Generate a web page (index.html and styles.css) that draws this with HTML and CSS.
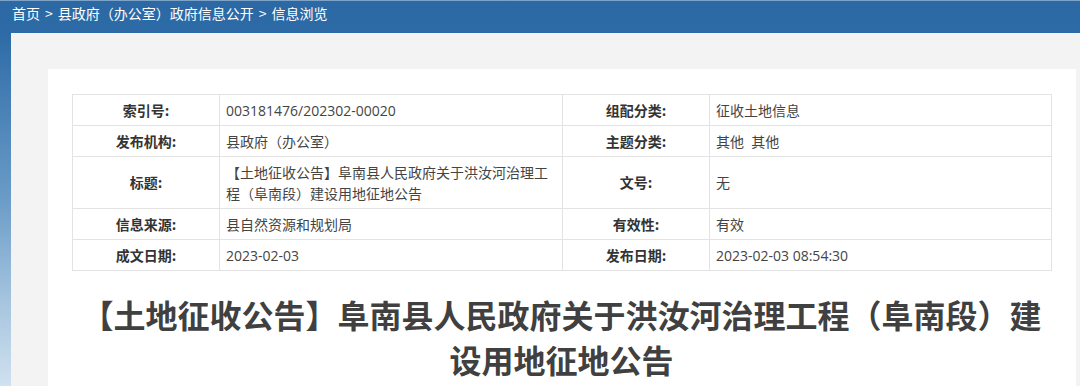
FILE: index.html
```html
<!DOCTYPE html>
<html lang="zh-CN">
<head>
<meta charset="utf-8">
<title>信息浏览</title>
<link rel="stylesheet" href="styles.css">
</head>
<body>
  <div class="crumb">首页<span class="sep">&gt;</span>县政府（办公室）政府信息公开<span class="sep">&gt;</span>信息浏览</div>
  <div class="panel">
    <div class="card">
      <table class="meta">
        <colgroup>
          <col class="c-label"><col class="c-value"><col class="c-label"><col class="c-value2">
        </colgroup>
        <tr>
          <th>索引号:</th><td>003181476/202302-00020</td>
          <th>组配分类:</th><td>征收土地信息</td>
        </tr>
        <tr>
          <th>发布机构:</th><td>县政府（办公室）</td>
          <th>主题分类:</th><td>其他&nbsp;&nbsp;其他</td>
        </tr>
        <tr class="tall">
          <th>标题:</th><td>【土地征收公告】阜南县人民政府关于洪汝河治理工程（阜南段）建设用地征地公告</td>
          <th>文号:</th><td>无</td>
        </tr>
        <tr>
          <th>信息来源:</th><td>县自然资源和规划局</td>
          <th>有效性:</th><td>有效</td>
        </tr>
        <tr>
          <th>成文日期:</th><td>2023-02-03</td>
          <th>发布日期:</th><td>2023-02-03 08:54:30</td>
        </tr>
      </table>
      <h1 class="title">【土地征收公告】阜南县人民政府关于洪汝河治理工程（阜南段）建设用地征地公告</h1>
    </div>
  </div>
</body>
</html>
```
FILE: styles.css
```css
html, body {
  margin: 0;
  padding: 0;
  height: 100%;
  overflow: hidden;
}
body {
  display: flex;
  flex-direction: column;
  font-family: "Noto Sans CJK SC", "Microsoft YaHei", sans-serif;
  background: linear-gradient(to bottom, #2c69a4 0px, #2d6ba6 33px, #3f79b0 80px, #6b9cc8 200px, #a5c4de 300px, #d0e1ef 386px);
}
.crumb {
  flex: none;
  height: 33px;
  box-sizing: border-box;
  padding: 0 12px;
  line-height: 25px;
  font-size: 14px;
  color: #ffffff;
  border-top: 1px solid #7ea3c8;
}
.crumb .sep {
  margin: 0 5px;
}
.panel {
  flex: 1;
  min-height: 0;
  margin-left: 11px;
  background: #f3f3f3;
  padding: 36px 0 0 37px;
  overflow: hidden;
}
.card {
  width: 1028px;
  height: 100%;
  box-sizing: border-box;
  background: #ffffff;
  padding: 25px 25px 0 24px;
  overflow: hidden;
}
.meta {
  width: 979px;
  border-collapse: collapse;
  table-layout: fixed;
  font-family: "Open Sans", "Noto Sans CJK SC", sans-serif;
  font-size: 14px;
  color: #444;
}
.c-label { width: 147px; }
.c-value { width: 343px; }
.c-value2 { width: 342px; }
.meta th, .meta td {
  border: 1px solid #e3e3e3;
  height: 31px;
  box-sizing: border-box;
  padding: 4px 6px;
  line-height: 21px;
  vertical-align: middle;
}
.meta th {
  font-family: "Noto Sans CJK SC", sans-serif;
  font-weight: bold;
  color: #333;
  text-align: center;
}
.meta td {
  text-align: left;
  font-weight: normal;
}
.meta tr.tall th, .meta tr.tall td {
  height: 52px;
}
.title {
  margin: 21px 0 0;
  font-size: 32px;
  line-height: 45px;
  font-weight: bold;
  color: #404040;
  text-align: center;
}
```
